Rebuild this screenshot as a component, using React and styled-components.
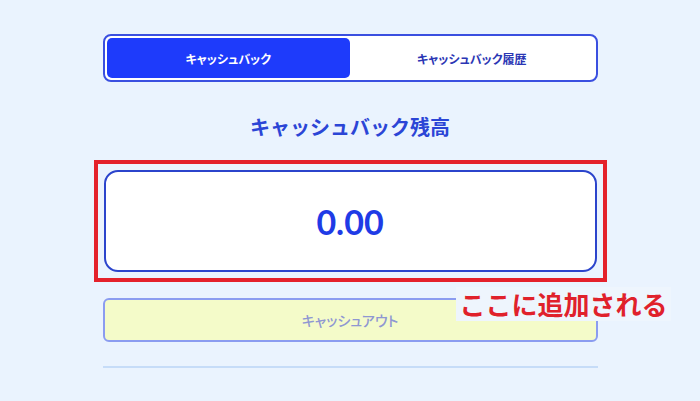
import React, { useState } from 'react'
import styled, { createGlobalStyle } from 'styled-components'

const GlobalStyle = createGlobalStyle`
  html, body {
    margin: 0;
    padding: 0;
    background: #eaf3fe;
    font-family: "Noto Sans CJK JP", "Noto Sans", sans-serif;
  }
`

const Page = styled.main`
  width: 495px;
  margin: 0 auto;
  padding-top: 34px;
`

const Tabs = styled.div`
  display: grid;
  grid-template-columns: 1fr 1fr;
  height: 48px;
  box-sizing: border-box;
  padding: 2px;
  border: 2px solid #3a4fe0;
  border-radius: 8px;
  background: #ffffff;
`

const Tab = styled.button`
  border: none;
  border-radius: 5px;
  font-family: inherit;
  font-size: 12px;
  font-weight: 700;
  font-feature-settings: "palt";
  cursor: pointer;
  background: ${(p) => (p.$active ? '#1e3bfb' : 'transparent')};
  color: ${(p) => (p.$active ? '#ffffff' : '#2b36b4')};
`

const Title = styled.h2`
  margin: 31px 0 0;
  text-align: center;
  font-size: 20px;
  line-height: 28px;
  font-weight: 700;
  color: #2b45d6;
`

const Body = styled.section`
  position: relative;
  margin-top: 19px;
`

const Highlight = styled.div`
  margin: 0 -9px 0 -9px;
  padding: 6px;
  border: 4px solid #e4212b;
`

const BalanceCard = styled.div`
  height: 102px;
  box-sizing: border-box;
  display: flex;
  align-items: center;
  justify-content: center;
  background: #ffffff;
  border: 2px solid #2b44cc;
  border-radius: 14px;
  font-family: Lato, "Noto Sans", sans-serif;
  font-size: 34px;
  font-weight: 700;
  color: #1f3be6;
`

const CashOut = styled.button`
  display: block;
  width: 100%;
  height: 44px;
  margin-top: 16px;
  border: 2px solid #8b9cf0;
  border-radius: 6px;
  background: #f4fbc9;
  font-family: inherit;
  font-size: 14px;
  font-weight: 500;
  font-feature-settings: "palt";
  color: #8f97d2;
`

const Note = styled.span`
  position: absolute;
  right: -73px;
  top: 127px;
  padding: 0 3px;
  background: #eef5fd;
  font-size: 26px;
  line-height: 34px;
  font-weight: 700;
  color: #e0212b;
`

const Divider = styled.hr`
  margin: 24px 0 0;
  border: none;
  height: 2px;
  background: #c6dcf8;
`

export default function App() {
  const [tab, setTab] = useState(0)
  return (
    <>
      <GlobalStyle />
      <Page>
        <Tabs>
          <Tab $active={tab === 0} onClick={() => setTab(0)}>キャッシュバック</Tab>
          <Tab $active={tab === 1} onClick={() => setTab(1)}>キャッシュバック履歴</Tab>
        </Tabs>
        <Title>キャッシュバック残高</Title>
        <Body>
          <Highlight>
            <BalanceCard>0.00</BalanceCard>
          </Highlight>
          <CashOut>キャッシュアウト</CashOut>
          <Note>ここに追加される</Note>
        </Body>
        <Divider />
      </Page>
    </>
  )
}
